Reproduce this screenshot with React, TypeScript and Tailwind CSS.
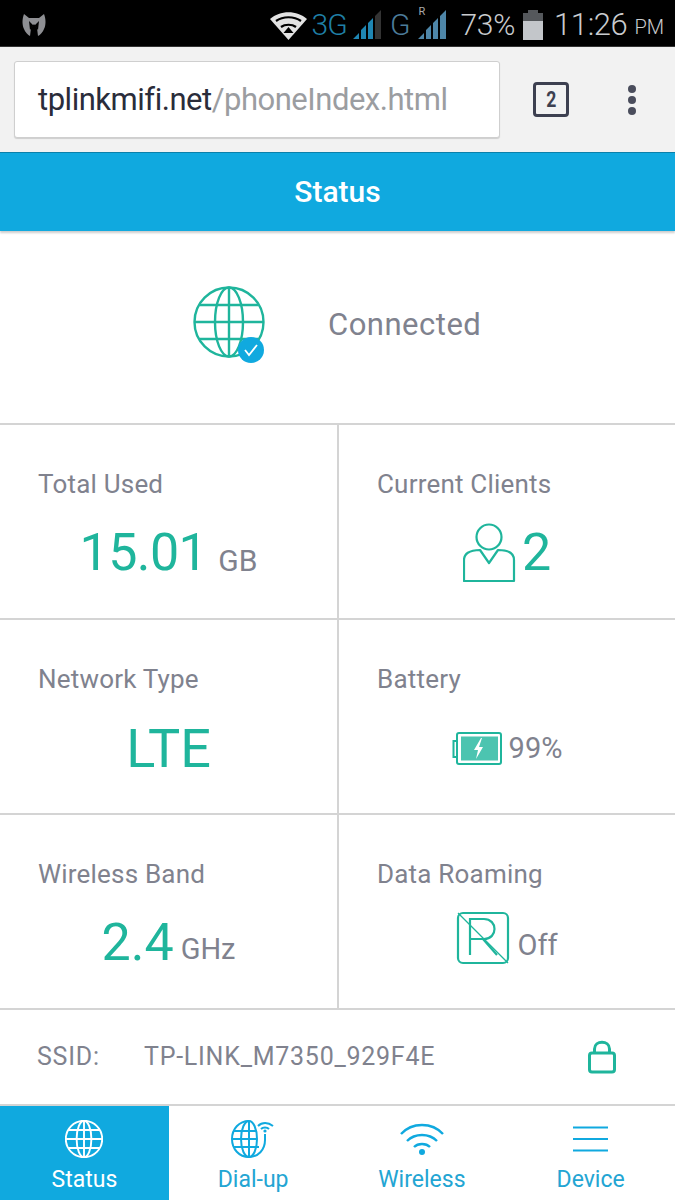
import React from "react";

const TEAL = "#1fb59c";
const BLUE = "#10a9df";

function GlobeLines({ color, width = 2.4 }: { color: string; width?: number }) {
  return (
    <g fill="none" stroke={color} strokeWidth={width}>
      <circle cx="36" cy="36" r="34.5" />
      <ellipse cx="36" cy="36" rx="14" ry="34.5" />
      <path d="M36 1.5v69M1.5 36h69M6.5 19h59M6.5 53h59" />
    </g>
  );
}

function StatusBar() {
  return (
    <div className="h-[47px] bg-black flex items-center pl-[22px] pr-[11px] pt-[3px] border-b border-[#333] font-['Roboto',sans-serif] text-[#c9cbce]">
      <svg width="24" height="22" viewBox="0 0 24 22">
        <path d="M2 0l5 4h10l5-4c2 5 2 11 0 15-1 3-4 6-6 7l-1-8-3-4-3 4-1 8c-2-1-5-4-6-7C0 11 0 5 2 0z" fill="#8e8f93" />
        <path d="M7 7l5 5 5-5-1 9-4-5-4 5z" fill="#000" />
      </svg>
      <div className="flex-1" />
      <svg width="37" height="30" viewBox="0 0 37 30" className="mr-[4px]">
        <path d="M0 9C10 0 27 0 37 9L18.5 30z" fill="#e3e3e3" />
        <path d="M6 11c7-5 18-5 25 0M11 17c4-3 11-3 15 0" stroke="#000" strokeWidth="2.2" fill="none" />
        <path d="M18.5 17l5 6h-10z" fill="#000" />
      </svg>
      <span className="text-[30px] font-light leading-none tracking-[-0.8px] text-[#1f7fa6] mr-[6px]">3G</span>
      <svg width="30" height="30" viewBox="0 0 30 30" className="mr-[7px]">
        <path d="M0 29l6-6v6zM8 29V20l5-5v14zM15 29V13l5-5v21z" fill="#1f86b3" />
        <path d="M22 29V6l6-6v29z" fill="#333" />
      </svg>
      <span className="text-[30px] font-light leading-none text-[#4c7c9a] mr-[7px]">G</span>
      <div className="relative w-[30px] h-[30px] mr-[13px]">
        <span className="absolute left-[1px] top-[-4px] text-[11px] leading-none text-[#aaa]">R</span>
        <svg width="30" height="30" viewBox="0 0 30 30" className="absolute left-0 top-0">
          <path d="M0 29l6-6v6zM8 29V20l5-5v14zM15 29V13l5-5v21zM22 29V6l6-6v29z" fill="#4e86a8" />
        </svg>
      </div>
      <span className="text-[30px] font-light leading-none mr-[8px] tracking-[-0.3px]">73%</span>
      <svg width="20" height="30" viewBox="0 0 20 30" className="mr-[11px]">
        <path d="M5 0h10v3h5v9H0V3h5z" fill="#55585c" />
        <path d="M0 11h20v19H0z" fill="#c3c6ca" />
      </svg>
      <span className="text-[31px] font-light leading-none tracking-[-0.4px]">11:26</span>
      <span className="text-[20px] font-light leading-none ml-[7px] mt-[5px]">PM</span>
    </div>
  );
}

function BrowserBar() {
  return (
    <div className="h-[105px] bg-[#f2f2f2] flex items-start pt-[14px] pl-[14px]">
      <div className="w-[486px] h-[77px] bg-white border border-[#cfcfcf] rounded-[3px] shadow-[0_1px_1px_rgba(0,0,0,0.15)] flex items-center pl-[23px] pt-[2px] font-['Roboto',sans-serif] text-[31px] tracking-[-0.48px]">
        <span className="text-[#2a2c3a]">tplinkmifi.net</span>
        <span className="text-[#9b9da1]">/phoneIndex.html</span>
      </div>
      <div className="ml-[33px] mt-[21px] w-[36px] h-[35px] border-[3px] border-[#3d4050] rounded-[4px] flex items-center justify-center font-['Roboto',sans-serif] font-bold text-[22px] text-[#3d4050]">
        <span className="inline-block scale-x-[0.8]">2</span>
      </div>
      <div className="ml-[59px] mt-[24px] flex flex-col gap-[3px]">
        <div className="w-[8px] h-[8px] rounded-full bg-[#4a4d5c]" />
        <div className="w-[8px] h-[8px] rounded-full bg-[#4a4d5c]" />
        <div className="w-[8px] h-[8px] rounded-full bg-[#4a4d5c]" />
      </div>
    </div>
  );
}

function Cell({ label, right, children }: { label: string; right?: boolean; children: React.ReactNode }) {
  return (
    <div className={`h-[195px] border-b-2 border-[#d4d4d4] pl-[38px] pt-[43px] ${right ? "" : "border-r-2"}`}>
      <div className="text-[26px] leading-[32px] tracking-[0.2px] text-[#80828e]">{label}</div>
      <div className="h-[70px] mt-[18px] flex items-center justify-center pr-[38px]">{children}</div>
    </div>
  );
}

function Tab({ label, active, children }: { label: string; active?: boolean; children: React.ReactNode }) {
  return (
    <div className={`flex-1 flex flex-col items-center pt-[14px] ${active ? "bg-[#10a9df] text-white" : "text-[#23a5d3]"}`}>
      <div className="h-[38px] flex items-center justify-center">{children}</div>
      <div className="mt-[8px] text-[23px] leading-[28px]">{label}</div>
    </div>
  );
}

export default function App() {
  return (
    <div className="w-[675px] h-[1200px] bg-white overflow-hidden flex flex-col font-['Roboto',sans-serif]">
      <StatusBar />
      <BrowserBar />
      <div className="h-[79px] shrink-0 bg-[#10a9df] border-t border-[#0b80aa] shadow-[0_2px_2px_rgba(0,0,0,0.2)] flex items-center justify-center pb-[2px] font-medium text-[30px] text-white">
        Status
      </div>

      <div className="h-[194px] shrink-0 border-b-2 border-[#d4d4d4] flex items-center pl-[193px] pb-[6px]">
        <div className="relative w-[72px] h-[76px]">
          <svg width="72" height="72" viewBox="0 0 72 72">
            <GlobeLines color={TEAL} />
          </svg>
          <div className="absolute left-[45px] top-[51px] w-[26px] h-[26px] rounded-full bg-[#10a9df] flex items-center justify-center">
            <svg width="16" height="14" viewBox="0 0 16 14">
              <path d="M2 7l4 5 8-10" fill="none" stroke="#fff" strokeWidth="1.8" />
            </svg>
          </div>
        </div>
        <div className="ml-[63px] mt-[2px] text-[31px] tracking-[0.5px] text-[#80828e]">Connected</div>
      </div>

      <div className="grid grid-cols-[339px_336px]">
        <Cell label="Total Used">
          <span className="text-[52px] text-[#1fb59c] leading-none tracking-[-0.6px]">15.01</span>
          <span className="text-[30px] text-[#80828e] ml-[11px] mt-[14px]">GB</span>
        </Cell>
        <Cell label="Current Clients" right>
          <svg width="54" height="60" viewBox="0 0 54 60" fill="none" stroke={TEAL} strokeWidth="2.2">
            <circle cx="26" cy="14" r="12.5" />
            <path d="M1 58V37c0-6 5-10 16-10l9 13 9-13c11 0 16 4 16 10v21z" strokeLinejoin="round" />
          </svg>
          <span className="text-[52px] text-[#1fb59c] leading-none ml-[5px]">2</span>
        </Cell>
        <Cell label="Network Type">
          <span className="text-[54px] text-[#1fb59c] leading-none mt-[2px]">LTE</span>
        </Cell>
        <Cell label="Battery" right>
          <svg width="50" height="34" viewBox="0 0 50 34" className="mr-[7px] mt-[2px]">
            <path d="M5 9H1.5v16H5" fill="none" stroke={TEAL} strokeWidth="2" />
            <rect x="5" y="1" width="44" height="31" rx="2" fill="none" stroke={TEAL} strokeWidth="2" />
            <rect x="9" y="4.5" width="37" height="24" fill="#4cc4b0" />
            <path d="M29 6l-7 12h4l-2 9 7-12h-4l3-9z" fill="#fff" />
          </svg>
          <span className="text-[29px] text-[#80828e] mt-[2px]">99%</span>
        </Cell>
        <Cell label="Wireless Band">
          <span className="text-[52px] text-[#1fb59c] leading-none">2.4</span>
          <span className="text-[29px] text-[#80828e] ml-[7px] mt-[14px]">GHz</span>
        </Cell>
        <Cell label="Data Roaming" right>
          <svg width="54" height="54" viewBox="0 0 54 54" fill="none" stroke={TEAL} className="mb-[10px]">
            <rect x="2" y="2" width="50" height="50" rx="5" strokeWidth="2.2" />
            <path d="M2 2l50 50" strokeWidth="1.2" />
            <path d="M14 44V8h14c14 0 14 20 0 20H14M27 28l14 16" strokeWidth="2.2" />
          </svg>
          <span className="text-[29px] text-[#80828e] ml-[7px] mt-[6px]">Off</span>
        </Cell>
      </div>

      <div className="h-[96px] shrink-0 border-b-2 border-[#d4d4d4] flex items-center pl-[37px] text-[25px] tracking-[0.75px] text-[#80828e]">
        <span className="w-[107px]">SSID:</span>
        <span className="flex-1">TP-LINK_M7350_929F4E</span>
        <svg width="28" height="34" viewBox="0 0 28 34" fill="none" stroke={TEAL} strokeWidth="3" className="mr-[59px]">
          <path d="M6.5 13V9c0-9 15-9 15 0v4" />
          <rect x="1.5" y="13" width="25" height="19" rx="2.5" />
        </svg>
      </div>

      <div className="flex-1 flex">
        <Tab label="Status" active>
          <svg width="38" height="38" viewBox="0 0 72 72">
            <GlobeLines color="#fff" width={3.6} />
          </svg>
        </Tab>
        <Tab label="Dial-up">
          <svg width="46" height="38" viewBox="0 0 46 38" fill="none" stroke={BLUE} strokeWidth="2">
            <path d="M19 1C9 1 2 9 2 19s7 18 17 18c9 0 16-7 16-17v-6" />
            <ellipse cx="19" cy="19" rx="8" ry="18" />
            <path d="M19 1v36M2 19h25M4 11h23M4 27h25" />
            <path d="M28 6c4-4 10-4 15 0M31 9c2-2 6-2 8 0" />
            <circle cx="35" cy="11" r="1.6" fill={BLUE} stroke="none" />
          </svg>
        </Tab>
        <Tab label="Wireless">
          <svg width="44" height="34" viewBox="0 0 44 34" fill="none" stroke={BLUE} strokeWidth="2.4">
            <path d="M1 12C12 0 32 0 43 12M7 19c8-8 22-8 30 0M14 25c4-4 12-4 16 0" />
            <circle cx="22" cy="30" r="3" fill={BLUE} stroke="none" />
          </svg>
        </Tab>
        <Tab label="Device">
          <svg width="35" height="26" viewBox="0 0 35 26" fill="none" stroke={BLUE} strokeWidth="2" className="mb-[1px]">
            <path d="M0 1.500h35M0 13h35M0 24.500h35" />
          </svg>
        </Tab>
      </div>
    </div>
  );
}
